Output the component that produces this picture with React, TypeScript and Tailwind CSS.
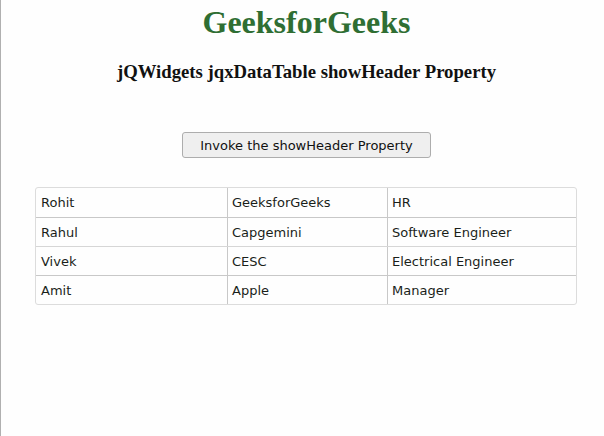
import React from "react";

const rows = [
  ["Rohit", "GeeksforGeeks", "HR"],
  ["Rahul", "Capgemini", "Software Engineer"],
  ["Vivek", "CESC", "Electrical Engineer"],
  ["Amit", "Apple", "Manager"],
];

export default function App() {
  return (
    <div className="h-[436px] w-[604px] bg-[#fefefe] border-l border-[#b0b0b0] overflow-hidden">
      <div className="pl-[34px] pr-[26px]">
        <h1
          className="mt-[5px] text-center text-[32px] font-bold leading-[35px] text-[#2f6e33]"
          style={{ fontFamily: '"Liberation Serif", serif' }}
        >
          GeeksforGeeks
        </h1>
        <h3
          className="mt-[21px] text-center text-[18.72px] font-bold leading-[21px] text-[#111]"
          style={{ fontFamily: '"Liberation Serif", serif' }}
        >
          jQWidgets jqxDataTable showHeader Property
        </h3>
        <div className="mt-[50px] flex justify-center">
          <button
            className="h-[26px] w-[249px] rounded-[3px] border border-[#adadad] bg-[#efefef] pt-[1px] text-[13px] text-[#111] leading-none"
            style={{ fontFamily: '"DejaVu Sans", sans-serif' }}
          >
            Invoke the showHeader Property
          </button>
        </div>
        <div
          className="mt-[29px] w-[542px] rounded-[3px] border border-[#dcdcdc] text-[13px] text-[#1a1f1a]"
          style={{ fontFamily: '"DejaVu Sans", sans-serif' }}
        >
          {rows.map((r, i) => (
            <div
              key={i}
              className={
                "grid grid-cols-[191px_160px_1fr] h-[29px] " +
                (i === 0 ? "" : i === 2 ? "border-t border-[#d6d6d6]" : "border-t border-[#c8c8c8]")
              }
            >
              <div className="flex items-center pl-[5px] pt-[1px]">{r[0]}</div>
              <div className="flex items-center pl-[4px] pt-[1px] border-l border-[#c8c8c8]">{r[1]}</div>
              <div className="flex items-center pl-[4px] pt-[1px] border-l border-[#c8c8c8]">{r[2]}</div>
            </div>
          ))}
        </div>
      </div>
    </div>
  );
}
